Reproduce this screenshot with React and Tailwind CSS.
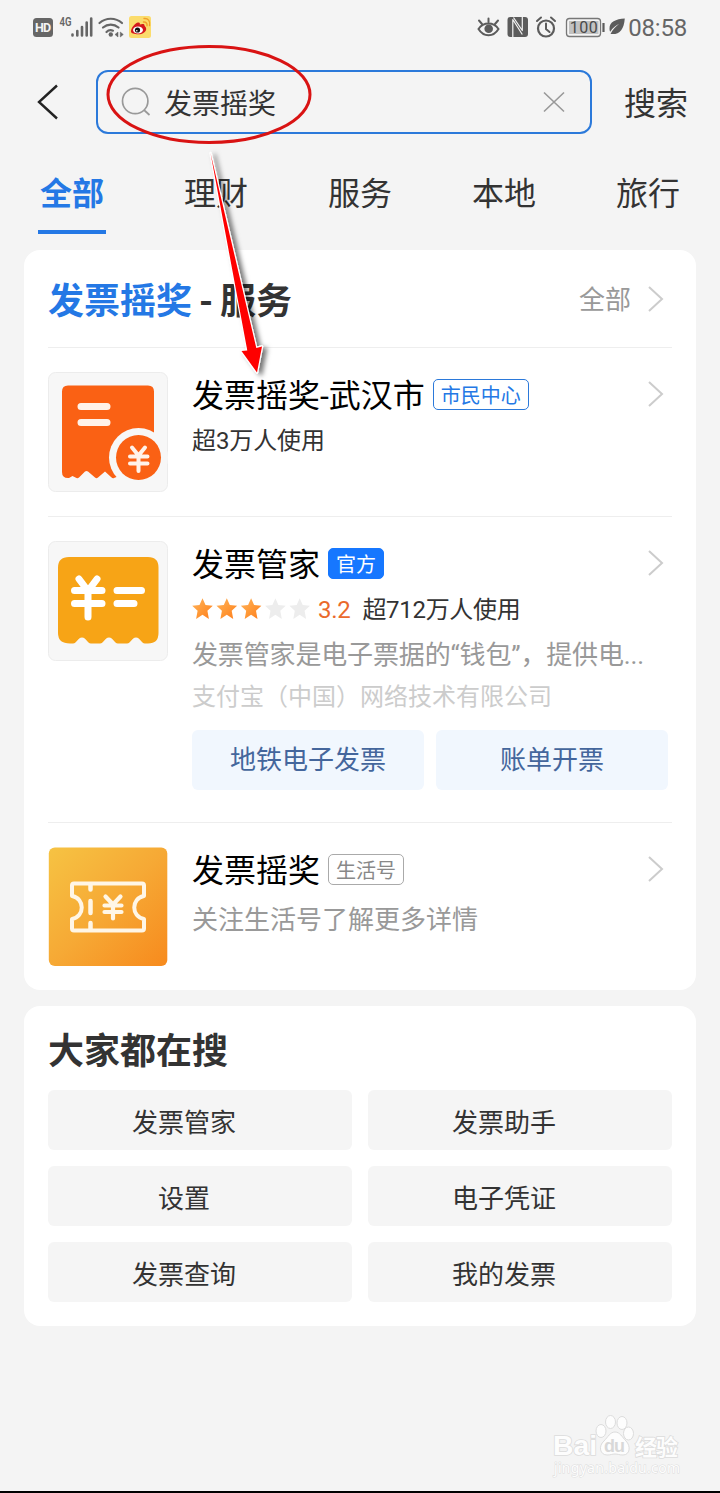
import { useState } from 'react'
import clsx from 'clsx'

const TABS = ['全部', '理财', '服务', '本地', '旅行']
const TRENDING = ['发票管家', '发票助手', '设置', '电子凭证', '发票查询', '我的发票']

function StatusBar() {
  return (
    <div className="flex h-14 items-center justify-between pl-8 pr-[33px] text-[#666]">
      <svg width="122" height="56" viewBox="0 0 122 56" fill="none">
        <rect x="1" y="18" width="20" height="19" rx="3.5" fill="#666" />
        <text x="11" y="32.3" textAnchor="middle" fontFamily="Roboto" fontSize="12.5" fontWeight="700" fill="#f4f4f4" textLength="16">HD</text>
        <text x="27.5" y="25.7" fontFamily="Roboto" fontSize="12" fontWeight="600" fill="#666" textLength="12" lengthAdjust="spacingAndGlyphs">4G</text>
        <g stroke="#666" strokeWidth="2.6" strokeLinecap="round">
          <path d="M40.5 34.5v1M45.3 31v4.5M50 27v8.5M54.7 22.5v13M59.2 18.5v17" />
        </g>
        <g stroke="#666" strokeWidth="2.2" strokeLinecap="round">
          <path d="M67.5 23a17 17 0 0 1 22.5 0M71 27.5a12 12 0 0 1 15.5 0M74.5 32a6 6 0 0 1 6.5-1.3" />
        </g>
        <circle cx="78.8" cy="34.5" r="2.2" fill="#666" />
        <path d="M86 32v5l-3-2.5zM88.3 32v5l3-2.5z" fill="#666" stroke="#666" strokeWidth=".5" />
        <rect x="97" y="16" width="22" height="22" rx="2.5" fill="#fbdc6c" />
        <path d="M99 31.5c0-4 4.5-8.5 7-9 2-.3 2 .7 1.8 2 2-.8 4.8-1 4.7 1 0 1 1.600 1 1.700 3.200.1 3.500-4 5.500-7.800 5.500-4 0-7.400-.9-7.400-2.700z" fill="#d5191c" />
        <ellipse cx="106" cy="30" rx="5" ry="3.5" fill="#fff" />
        <circle cx="105.5" cy="30" r="2.6" fill="#111" />
        <circle cx="104.8" cy="30.7" r=".8" fill="#fff" />
        <path d="M111.5 22c2.500-.3 4 1.500 3.500 3.700M112 18.500c4-.5 6.500 2.500 5.500 7" stroke="#f0a02a" strokeWidth="1.4" strokeLinecap="round" />
      </svg>

      <div className="flex items-center">
        <svg width="151" height="56" viewBox="475 0 151 56" fill="none">
          <g stroke="#5c5c5c" strokeWidth="2" strokeLinecap="round">
            <path d="M478.5 29c5-7.300 15-7.300 20 0-5 8.300-15 8.300-20 0z" />
            <path d="M488.5 18.5v3.5M479 20.5l3 3.5M498 20.5l-3 3.5" />
          </g>
          <circle cx="488.7" cy="28.8" r="4.3" fill="#5c5c5c" />
          <rect x="507.5" y="17" width="20.5" height="20" rx="3" fill="#5c5c5c" />
          <path d="M512.8 37V19.500l9.500 15M513.500 17.500l8.800 13V17" stroke="#f4f4f4" strokeWidth="1.2" strokeLinejoin="round" />
          <circle cx="546" cy="28.5" r="8" stroke="#5c5c5c" strokeWidth="2.2" />
          <path d="M546 23.5v5.500l3.500 3M537 21l4-3.500M555 21l-4-3.500" stroke="#5c5c5c" strokeWidth="2" strokeLinecap="round" />
          <rect x="566.5" y="18.5" width="34" height="18" rx="3" stroke="#777" strokeWidth="1.3" />
          <rect x="569" y="21" width="29.5" height="13" fill="#c2c2c2" />
          <text x="583.7" y="32.8" textAnchor="middle" fontFamily="Roboto" fontSize="16" fill="#4a4a4a" textLength="28">100</text>
          <path d="M603.5 23v9" stroke="#5c5c5c" strokeWidth="2.2" />
          <path d="M624.8 18.5c-9 .5-15.500 3.500-15.300 10 0 1.500.3 2.500.7 3.300 2.500-4 5.500-6.300 9-8-3 2.700-6.500 5.500-8.700 10.200 9 1 13.300-4 14.300-15.500z" fill="#5c5c5c" />
        </svg>
        <span className="ml-[2px] text-2xl leading-none tracking-[-0.2px]">08:58</span>
      </div>
    </div>
  )
}

function SearchBar() {
  return (
    <div className="mt-[14px] flex h-16 items-center">
      <svg className="ml-9 shrink-0" width="24" height="40" viewBox="0 0 24 40" fill="none">
        <path d="M21 3.5L3 20l18 16.5" stroke="#222" strokeWidth="2.4" />
      </svg>
      <div className="ml-9 flex h-16 w-[496px] items-center rounded-xl border-2 border-[#2b79da] pl-[22px] pr-6">
        <svg width="32" height="32" viewBox="0 0 32 32" fill="none" stroke="#999" strokeWidth="1.7">
          <circle cx="15.2" cy="15" r="12.7" />
          <path d="M24 24l5.5 5" />
        </svg>
        <span className="ml-3 pt-[5px] text-[28px] leading-10 text-[#333]">发票摇奖</span>
        <svg className="ml-auto" width="24" height="24" viewBox="0 0 24 24" fill="none">
          <path d="M2 2.5l20 19M22 2.5L2 21.5" stroke="#999" strokeWidth="1.6" />
        </svg>
      </div>
      <button className="ml-8 pt-1 text-[32px] leading-10 text-[#333]">搜索</button>
    </div>
  )
}

function Chevron({ className }) {
  return (
    <svg className={clsx('shrink-0', className)} width="18" height="28" viewBox="0 0 18 28" fill="none">
      <path d="M2 2l13 12L2 26" stroke="#ccc" strokeWidth="2" />
    </svg>
  )
}

function Tag({ className, children }) {
  return (
    <span className={clsx('ml-2 flex h-[31px] items-center whitespace-nowrap rounded-[5px] border px-[7px] pt-0.5 text-xl leading-none', className)}>
      {children}
    </span>
  )
}

function ReceiptIcon() {
  return (
    <svg className="shrink-0" width="120" height="120" viewBox="0 0 120 120" fill="none">
      <rect x=".5" y=".5" width="119" height="119" rx="7" fill="#f7f7f7" stroke="#ececec" />
      <path d="M20 13.5H100Q106 13.5 106 19.5V90L66 106Q65 107 63 105L57 99.500L50 105.500Q48.500 107 47 105.500L40 99.500Q38.500 98.500 37 99.500L31 105.500Q29.500 107 27.500 105.500L24.500 104L21 106Q14 106.500 14 100V19.5Q14 13.5 20 13.5z" fill="#fa6114" />
      <path d="M33 34.5h26M33 50.5h26" stroke="#fff2e9" strokeWidth="7" strokeLinecap="round" />
      <circle cx="90.5" cy="85.5" r="29.5" fill="#f7f7f7" />
      <circle cx="90.5" cy="85.5" r="22.5" fill="#fa6114" />
      <path d="M84 75.5l6.5 8 6.5-8M90.5 84v15M82 84.5h17.5M82 91.5h17.5" stroke="#fff2e9" strokeWidth="4" strokeLinecap="round" strokeLinejoin="round" />
    </svg>
  )
}

function ButlerIcon() {
  return (
    <svg className="shrink-0" width="120" height="120" viewBox="0 0 120 120" fill="none">
      <rect x=".5" y=".5" width="119" height="119" rx="7" fill="#f7f7f7" stroke="#ececec" />
      <path d="M21 16h79q10.500 0 10.500 10.500V92q0 10.500-10.500 10.500h-3c-4 0-4.500-6-9-6s-5 6-9 6h-9c-4 0-4.500-6-9-6s-5 6-9 6h-9c-4 0-4.500-6-9-6s-5 6-9 6h-3Q10 102.500 10 92V26.500Q10 16 21 16z" fill="#f7a416" />
      <path d="M31 38l9 12 9-12M40 50v26M26.500 49.500H54M26.500 62.500H54M69 49.500h24.500M69 62.500h17" stroke="#fff" strokeWidth="7" strokeLinecap="round" strokeLinejoin="round" />
    </svg>
  )
}

function CouponIcon() {
  return (
    <svg className="shrink-0" width="120" height="120" viewBox="0 0 120 120" fill="none">
      <defs>
        <linearGradient id="coupon" x1="0" y1="0" x2="1" y2="1">
          <stop offset="0" stopColor="#f6c343" />
          <stop offset=".5" stopColor="#f6a935" />
          <stop offset="1" stopColor="#f78a1d" />
        </linearGradient>
      </defs>
      <rect x=".8" y=".5" width="118.5" height="118.5" rx="6" fill="url(#coupon)" />
      <path d="M26 36.5h68q2 0 2 2v10.500c-13 2-13 21 0 23v9.500q0 2-2 2H26q-2 0-2-2V72c13-2 13-21 0-23V38.500q0-2 2-2z" stroke="#fff6e6" strokeWidth="4" strokeLinejoin="round" />
      <path d="M42.5 38v4.500M42.500 54v12M42.500 76v6" stroke="#fff6e6" strokeWidth="4.5" strokeLinecap="round" />
      <path d="M57.5 49.500l7.500 8 7.500-8M65 58v13.500M56.500 58.500h17M56.500 65h17" stroke="#fff6e6" strokeWidth="4.2" strokeLinecap="round" strokeLinejoin="round" />
    </svg>
  )
}

function Stars({ score }) {
  return (
    <svg width="120" height="24" viewBox="0 0 120 24">
      <defs>
        <linearGradient id="star" x1="0" y1="0" x2="1" y2="1">
          <stop offset="0" stopColor="#ffb45e" />
          <stop offset=".5" stopColor="#ff9a38" />
          <stop offset="1" stopColor="#ff7d1c" />
        </linearGradient>
      </defs>
      {[0, 1, 2, 3, 4].map(i => (
        <path
          key={i}
          transform={`translate(${i * 24.3} -.8)`}
          d="M10.500 1l3 6.700 7.300.8-5.400 5 1.500 8.300-6.400-4.200-6.400 4.200L5.600 13.500.2 8.500l7.300-.8z"
          fill={i < Math.floor(score) ? 'url(#star)' : '#ededed'}
        />
      ))}
    </svg>
  )
}

function ResultRow({ icon, title, tag, className, children }) {
  return (
    <div className={clsx('flex pt-6', className)}>
      {icon}
      <div className="ml-6 w-[480px]">
        <div className="flex h-12 items-center">
          <h3 className="whitespace-nowrap text-[32px] leading-[48px] text-black">{title}</h3>
          <div className="-mt-[3px]">{tag}</div>
          <Chevron className="-mt-1 ml-auto mr-[7px]" />
        </div>
        {children}
      </div>
    </div>
  )
}

function Annotation() {
  return (
    <svg className="pointer-events-none absolute left-0 top-0" width="340" height="400" viewBox="0 0 340 400" fill="none">
      <defs>
        <filter id="arrowShadow" x="-50%" y="-10%" width="200%" height="120%">
          <feDropShadow dx="4" dy="2" stdDeviation="2.5" floodColor="#000" floodOpacity=".55" />
        </filter>
      </defs>
      <ellipse cx="209" cy="94.5" rx="101" ry="48" stroke="#d91313" strokeWidth="3" />
      <path
        d="M210.500 153L247.300 350.500 241.500 351 257 372.500 262 346.500 256.300 348z"
        fill="#fe0000"
        stroke="#fff"
        strokeWidth="2.4"
        strokeLinejoin="round"
        paintOrder="stroke"
        filter="url(#arrowShadow)"
      />
    </svg>
  )
}

function Watermark() {
  return (
    <svg className="absolute bottom-2 right-[34px]" width="136" height="70" viewBox="0 0 136 70" fill="#fdfdfd" stroke="#dcdcdc" strokeWidth="1">
      <g paintOrder="stroke" fontWeight="700" strokeWidth="1.6">
        <text x="3" y="42" fontFamily="Liberation Sans" fontSize="27" textLength="44" lengthAdjust="spacingAndGlyphs">Bai</text>
        <text x="85" y="41.5" fontFamily="Noto Sans CJK SC" fontSize="22" textLength="43">经验</text>
      </g>
      <ellipse cx="51" cy="18" rx="5" ry="6.5" />
      <ellipse cx="60.5" cy="9" rx="5" ry="6.5" />
      <ellipse cx="72" cy="10" rx="5" ry="6.5" />
      <ellipse cx="78.5" cy="20.5" rx="5" ry="6.5" />
      <path d="M65 19c5 0 7 5 11 9 5 5 4 14-3 14-4 0-5-1-8-1s-4 1-8 1c-7 0-9-9-3-14 4-4 6-9 11-9z" />
      <text x="54" y="39" fontFamily="Liberation Sans" fontSize="18" fontWeight="700" fill="#d8d8d8" stroke="none" textLength="21">du</text>
      <text x="4" y="59.5" fontFamily="Noto Sans" fontSize="14" paintOrder="stroke" textLength="126">jingyan.baidu.com</text>
    </svg>
  )
}

export default function App() {
  const [activeTab, setActiveTab] = useState(0)

  return (
    <div className="relative h-[1493px] w-[720px] overflow-hidden border-b-2 border-black bg-[#f4f4f4] font-['Roboto','Noto_Sans_CJK_SC',sans-serif]">
      <StatusBar />
      <SearchBar />

      <nav className="flex h-[100px]">
        {TABS.map((tab, i) => (
          <button
            key={tab}
            onClick={() => setActiveTab(i)}
            className={clsx(
              'flex w-36 flex-col items-center pt-10 text-[32px] leading-10',
              i === activeTab ? 'font-bold text-[#2478e5]' : 'text-[#333]'
            )}
          >
            {tab}
            {i === activeTab && <span className="mt-4 h-1 w-[68px] bg-[#2478e5]" />}
          </button>
        ))}
      </nav>

      <main className="mx-4 mt-4 flex flex-col gap-4 px-2">
        <section className="rounded-2xl bg-white px-6">
          <div className="flex h-[98px] items-center border-b border-[#eee]">
            <h2 className="pt-1.5 text-4xl font-bold leading-[48px] text-[#333] [word-spacing:-2px]">
              <span className="text-[#2478e5]">发票摇奖</span> - 服务
            </h2>
            <span className="ml-auto pt-0.5 text-[26px] leading-10 text-[#999]">全部</span>
            <Chevron className="ml-4 mr-[7px]" />
          </div>

          <ResultRow
            icon={<ReceiptIcon />}
            title="发票摇奖-武汉市"
            tag={<Tag className="border-[#2b79da] text-[#2478e5]">市民中心</Tag>}
            className="h-[169px] border-b border-[#eee]"
          >
            <p className="mt-[5px] text-2xl leading-8 tracking-[-0.1px] text-[#333]">超3万人使用</p>
          </ResultRow>

          <ResultRow
            icon={<ButlerIcon />}
            title="发票管家"
            tag={<Tag className="border-[#1677ff] bg-[#1677ff] text-white">官方</Tag>}
            className="h-[306px] border-b border-[#eee]"
          >
            <div className="mt-[5px] flex h-8 items-center text-2xl leading-8">
              <Stars score={3.2} />
              <span className="ml-[6px] tracking-[-0.3px] text-[#ea6a2c]">3.2</span>
              <span className="ml-3 tracking-[-0.3px] text-[#333]">超712万人使用</span>
            </div>
            <p className="mt-[11px] whitespace-nowrap text-[26px] leading-9 tracking-[-0.15px] text-[#999]">发票管家是电子票据的“钱包”，提供电...</p>
            <p className="mt-2 whitespace-nowrap text-2xl leading-8 text-[#ccc]">支付宝（中国）网络技术有限公司</p>
            <div className="mt-[17px] flex gap-3 text-[26px] text-[#44669c]">
              <button className="h-[60px] w-[232px] rounded-md bg-[#f1f7fe]">地铁电子发票</button>
              <button className="h-[60px] w-[232px] rounded-md bg-[#f1f7fe]">账单开票</button>
            </div>
          </ResultRow>

          <ResultRow
            icon={<CouponIcon />}
            title="发票摇奖"
            tag={<Tag className="border-[#aaa] text-[#888]">生活号</Tag>}
            className="pb-[23px]"
          >
            <p className="mt-[7px] text-[26px] leading-9 text-[#999]">关注生活号了解更多详情</p>
          </ResultRow>
        </section>

        <section className="rounded-2xl bg-white p-6">
          <h2 className="-mt-0.5 text-4xl font-bold leading-[48px] text-[#333]">大家都在搜</h2>
          <div className="mt-3.5 grid grid-cols-2 gap-4">
            {TRENDING.map(word => (
              <button key={word} className="h-[60px] rounded-md bg-[#f5f5f5] pr-8 pt-1.5 text-[26px] text-[#333]">
                {word}
              </button>
            ))}
          </div>
        </section>
      </main>

      <Annotation />
      <Watermark />
    </div>
  )
}
